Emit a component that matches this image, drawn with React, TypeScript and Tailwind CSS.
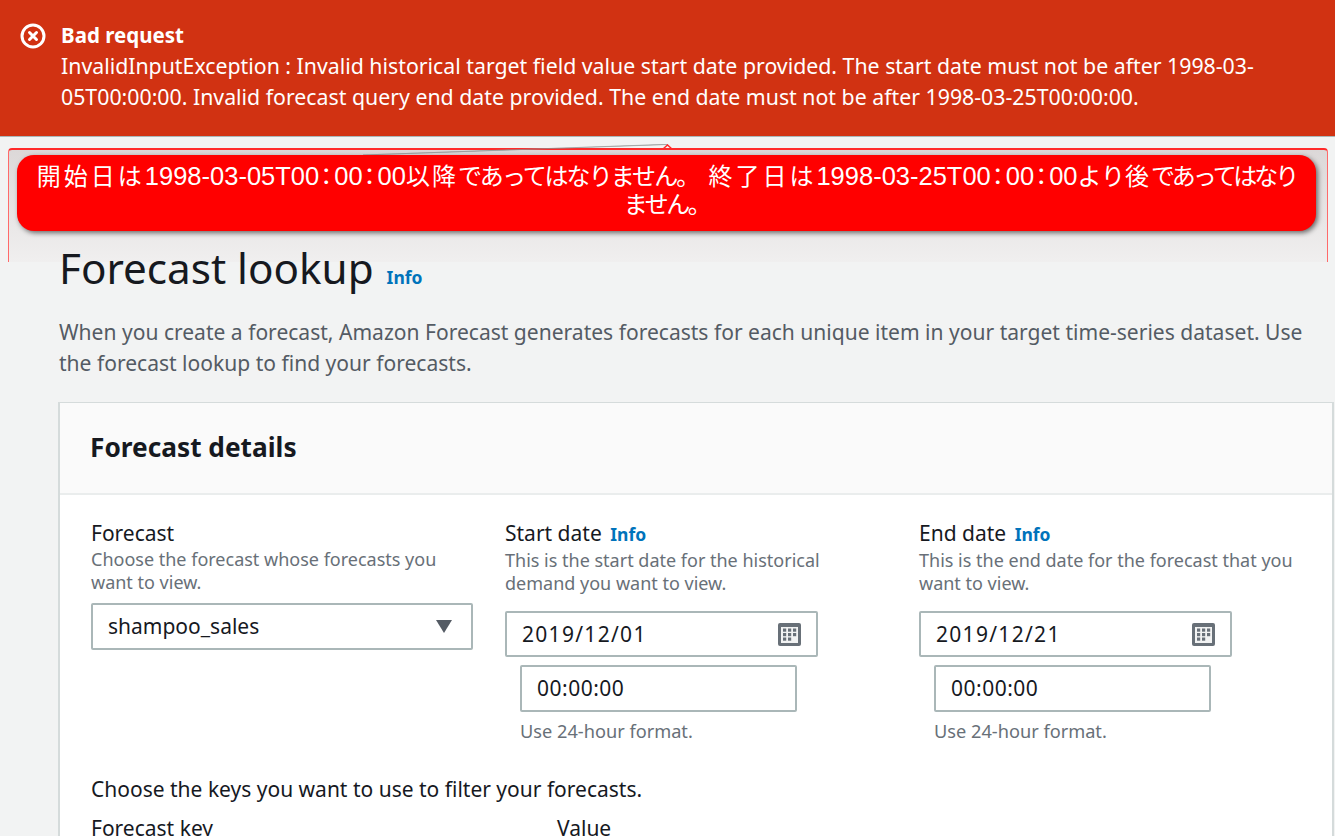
const sans = { fontFamily: '"Noto Sans", sans-serif' };

function CalendarIcon() {
  return (
    <svg width="23" height="23" viewBox="0 0 23 23" className="shrink-0">
      <rect x="0" y="0" width="23" height="23" rx="2" fill="#687078" />
      <rect x="3" y="4" width="17" height="16" fill="#f2f3f3" />
      {[5.5, 10, 14.5].map((y) =>
        [5, 10, 15].map((x) =>
          y === 14.5 && x === 15 ? null : <rect key={`${x}-${y}`} x={x} y={y} width="3.2" height="3.2" fill="#687078" />
        )
      )}
    </svg>
  );
}

function Colon() {
  return <span className="ml-[-5px] tracking-[-4px]">：</span>;
}

function DateField({ label, help1, help2, date, width }: { label: string; help1: string; help2: string; date: string; width: string }) {
  return (
    <div className={width}>
      <div className="text-[21px] leading-[23px] text-[#16191f] whitespace-nowrap">
        {label} <span className="ml-[3px] text-[17.5px] font-bold text-[#0073bb]">Info</span>
      </div>
      <div className="mt-[3px] text-[18px] leading-[23px] text-[#687078] whitespace-nowrap">{help1}</div>
      <div className="text-[18px] leading-[23px] text-[#687078] whitespace-nowrap">{help2}</div>
      <div className="mt-[16px] flex h-[46px] w-[313px] items-center justify-between rounded-[2px] border-2 border-[#aab7b8] bg-white pl-[15px] pr-[15px] text-[21px] tracking-[1.3px] text-[#16191f]">
        <span className="pt-[1px]">{date}</span>
        <CalendarIcon />
      </div>
      <div className="ml-[15px] mt-[8px] flex h-[47px] w-[277px] items-center rounded-[2px] border-2 border-[#aab7b8] bg-white pl-[15px] text-[21px] tracking-[0.5px] text-[#16191f]">
        00:00:00
      </div>
      <div className="ml-[15px] mt-[8px] text-[18.2px] leading-[23px] text-[#687078]">Use 24-hour format.</div>
    </div>
  );
}

export default function App() {
  return (
    <div style={sans} className="relative h-[836px] w-[1335px] overflow-hidden bg-[#f2f3f3]">
      <div className="flex h-[137px] gap-[15px] border-b border-[#aab7b8] bg-[#d13212] pl-[20px] pt-[20px] text-white">
        <svg width="26" height="26" viewBox="0 0 26 26" className="mt-[3px] shrink-0" fill="none" stroke="white">
          <circle cx="13" cy="13" r="11" strokeWidth="3" />
          <path d="M9.5 9.5l7 7M16.5 9.5l-7 7" strokeWidth="3" strokeLinecap="round" />
        </svg>
        <div className="leading-[31px]">
          <div className="text-[20.5px] font-bold">Bad request</div>
          <div className="-mt-[1px] w-[1230px] text-[21.3px]">
            InvalidInputException : Invalid historical target field value start date provided. The start date must not be after 1998-03-05T00:00:00. Invalid forecast query end date provided. The end date must not be after 1998-03-25T00:00:00.
          </div>
        </div>
      </div>

      <div className="absolute left-[8px] top-[148px] h-[114px] w-[1320px] rounded-t-[4px] border-x border-t-2 border-x-[#ff6a6a] border-t-[#ff2a2a] bg-gradient-to-b from-[#dcd8d8] to-[#f0efef]" />
      <svg className="absolute left-[350px] top-[142px]" width="330" height="16" viewBox="0 0 330 16" fill="none">
        <path d="M13 13L312 2.5L318 2.5Z" fill="#8d9090" stroke="#8d9090" strokeWidth="0.5" />
        <path d="M313 7L317.5 3L322 7" stroke="#ff2a2a" strokeWidth="1.5" />
      </svg>
      <div
        style={{ fontFamily: '"Liberation Sans", "Noto Sans CJK JP", sans-serif' }}
        className="absolute left-[17px] top-[155px] h-[76px] w-[1299px] whitespace-nowrap rounded-[17px] bg-[#ff0000] pt-[7px] text-center text-[24px] leading-[28px] text-white shadow-[2px_2px_5px_rgba(0,0,0,0.55)]"
      >
        <span className="tracking-[3px]">開始日は</span>
        <span className="text-[25.5px]">1998-03-05T00</span>
        <Colon />
        <span className="text-[25.5px]">00</span>
        <Colon />
        <span className="text-[25.5px]">00</span>
        <span className="tracking-[2px]">以降</span>
        <span className="tracking-[-1.9px]">であってはなりません。</span>
        <span className="ml-[10px] tracking-[3px]">終了日は</span>
        <span className="text-[25.5px]">1998-03-25T00</span>
        <Colon />
        <span className="text-[25.5px]">00</span>
        <Colon />
        <span className="text-[25.5px]">00</span>
        <span>より</span>
        <span className="tracking-[2px]">後</span>
        <span className="tracking-[-3px]">であってはなり</span>
        <br />
        <span className="tracking-[-2.5px]">ません。</span>
      </div>

      <main className="relative pl-[59px] pt-[101px]">
        <div className="flex items-baseline gap-[13px]">
          <h1 className="text-[42.2px] leading-[60px] font-normal text-[#16191f]">Forecast lookup</h1>
          <span className="text-[17.5px] font-bold text-[#0073bb]">Info</span>
        </div>
        <p className="mt-[18px] w-[1262px] text-[21.05px] leading-[31px] text-[#545b64]">
          When you create a forecast, Amazon Forecast generates forecasts for each unique item in your target time-series dataset. Use the forecast lookup to find your forecasts.
        </p>

        <section className="-ml-[1px] mt-[24px] h-[500px] w-[1276px] border-l-2 border-r-2 border-t border-[#d5dbdb] bg-white">
          <div className="flex h-[92px] items-center border-b-2 border-[#eaeded] bg-[#fafafa] pl-[30px]">
            <h2 className="text-[26.25px] font-bold text-[#16191f]">Forecast details</h2>
          </div>
          <div className="pl-[31px] pt-[27px]">
            <div className="flex">
              <div className="w-[414px]">
                <div className="text-[21px] leading-[23px] text-[#16191f]">Forecast</div>
                <div className="mt-[3px] text-[18px] leading-[23px] text-[#687078]">Choose the forecast whose forecasts you</div>
                <div className="text-[18px] leading-[23px] text-[#687078]">want to view.</div>
                <div className="mt-[9px] flex h-[47px] w-[382px] items-center justify-between rounded-[2px] border-2 border-[#aab7b8] bg-white pl-[15px] pr-[19px] text-[21px] text-[#16191f]">
                  <span>shampoo_sales</span>
                  <svg width="16" height="13" viewBox="0 0 16 13"><path d="M0 0H16L8 13Z" fill="#545b64" /></svg>
                </div>
              </div>
              <DateField width="w-[414px]" label="Start date" help1="This is the start date for the historical" help2="demand you want to view." date="2019/12/01" />
              <DateField width="w-[400px]" label="End date" help1="This is the end date for the forecast that you" help2="want to view." date="2019/12/21" />
            </div>
            <div className="mt-[31px] text-[21px] leading-[31px] text-[#16191f]">Choose the keys you want to use to filter your forecasts.</div>
            <div className="mt-[8px] flex text-[21px] leading-[31px] text-[#16191f]">
              <div className="w-[466px]">Forecast key</div>
              <div>Value</div>
            </div>
          </div>
        </section>
      </main>
    </div>
  );
}
